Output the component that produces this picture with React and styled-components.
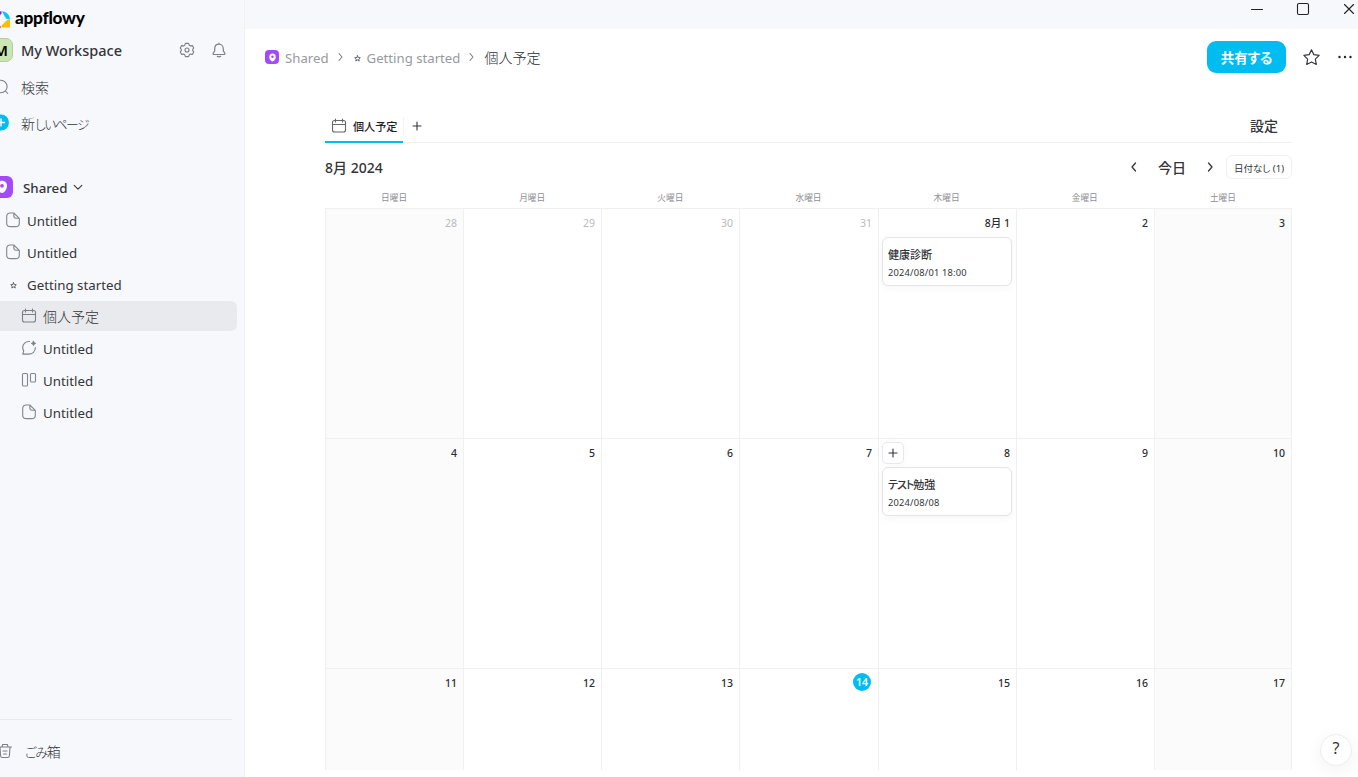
import React from "react"
import styled, { createGlobalStyle, css } from "styled-components"

const GlobalStyle = createGlobalStyle`
  * {
    box-sizing: border-box;
  }

  body {
    margin: 0;
    overflow: hidden;
    background: #ffffff;
    color: #333539;
    font-family: "Noto Sans", "Noto Sans CJK JP", sans-serif;
    font-size: 14px;
    font-feature-settings: "palt";
  }

  button {
    padding: 0;
    border: 0;
    background: none;
    color: inherit;
    font: inherit;
    font-feature-settings: inherit;
  }
`

const Icon = styled.svg`
  display: block;
  flex: none;
  width: ${(p) => p.$w || 16}px;
  height: ${(p) => p.$h || p.$w || 16}px;
  fill: none;
  stroke: ${(p) => p.$color || "#7d7f86"};
  stroke-width: ${(p) => p.$stroke || 1.1};
  stroke-linecap: round;
  stroke-linejoin: round;
  overflow: visible;
`

const Layout = styled.div`
  display: flex;
  width: 1358px;
  height: 777px;
  overflow: hidden;
`

/* Sidebar */

const Sidebar = styled.aside`
  display: flex;
  flex-direction: column;
  flex: none;
  width: 245px;
  background: #f7f8fc;
  border-right: 1px solid #f0f1f3;
  overflow: hidden;
`

const Brand = styled.div`
  display: flex;
  align-items: center;
  gap: 5px;
  height: 32px;
  margin-left: -8px;
  padding-top: 5px;
`

const BrandName = styled.span`
  margin-top: -1px;
  color: #000000;
  font-family: Lato, sans-serif;
  font-size: 17.2px;
  font-weight: 900;
  line-height: 20px;
  letter-spacing: -0.25px;
`

const WorkspaceRow = styled.div`
  display: flex;
  align-items: center;
  height: 36px;
  margin-left: -11px;
  padding-right: 17px;
`

const Avatar = styled.span`
  display: flex;
  align-items: center;
  justify-content: center;
  width: 24px;
  height: 24px;
  border: 1px solid #b5c9a4;
  border-radius: 7px;
  background: #cbe6b1;
  color: #000000;
  font-size: 15px;
  font-weight: 600;
`

const WorkspaceName = styled.span`
  flex: 1;
  margin-left: 8px;
  font-size: 14.5px;
  font-weight: 500;
`

const WorkspaceActions = styled.div`
  display: flex;
  gap: 16px;
`

const QuickLink = styled.div`
  display: flex;
  align-items: center;
  gap: 12px;
  height: 36px;
  margin-left: -7px;
  padding-top: 1px;
  font-weight: 300;

  svg {
    margin-top: 1px;
  }
`

const Kana = styled.span`
  font-size: ${(p) => p.$size || "inherit"};
  letter-spacing: ${(p) => p.$tight}px;
`

const SpaceHeader = styled.div`
  display: flex;
  align-items: center;
  height: 32px;
  margin: 31px 0 2px -9px;
  font-size: 13.3px;
  font-weight: 500;

  span {
    margin: 2px 4px 0 10px;
  }
`

const SpaceBadge = styled.div`
  display: flex;
  align-items: center;
  justify-content: center;
  flex: none;
  width: ${(p) => p.$size}px;
  height: ${(p) => p.$size}px;
  border-radius: ${(p) => p.$size / 4 + 0.5}px;
  background: #a34afd;
`

const PageRow = styled.div`
  display: flex;
  align-items: center;
  gap: 6px;
  height: 30px;
  margin: 0 7px 2px 0;
  padding-left: ${(p) => (p.$nested ? 21 : 5)}px;
  border-radius: 0 6px 6px 0;
  background: ${(p) => (p.$active ? "#e9eaee" : "transparent")};
  font-size: ${(p) => (p.$active ? 14 : 13.3)}px;
  font-weight: ${(p) => (p.$active ? 300 : 400)};

  span {
    padding-top: ${(p) => (p.$active ? 0 : 2)}px;
    margin-top: ${(p) => (p.$active ? -1 : 0)}px;
  }
`

const Emoji = styled.span`
  display: flex;
  justify-content: center;
  width: 16px;
`

const Trash = styled.div`
  display: flex;
  align-items: center;
  gap: 12px;
  height: 58px;
  margin: auto 12px 0 0;
  padding: 5px 0 0 0;
  border-top: 1px solid #e9eaee;
  font-weight: 300;

  svg {
    margin-left: -3px;
  }
`

/* Main area */

const Main = styled.main`
  position: relative;
  display: flex;
  flex-direction: column;
  flex: 1;
  min-width: 0;
`

const TitleBar = styled.div`
  display: flex;
  justify-content: flex-end;
  gap: 34px;
  height: 29px;
  padding: 3px 3px 0 0;
  background: #f7f8fc;
`

const Header = styled.header`
  display: flex;
  align-items: center;
  height: 56px;
  padding: 0 5px 0 20px;
`

const Crumbs = styled.nav`
  display: flex;
  align-items: center;
  flex: 1;
  color: #98999e;
  font-size: 13.2px;
  line-height: 20px;

  & > svg:nth-of-type(2) {
    margin-top: 2px;
  }
`

const Crumb = styled.span`
  margin-left: ${(p) => p.$gap || 0}px;
  padding-top: 2px;
  ${(p) =>
    p.$current &&
    css`
      padding-top: 1px;
      color: #2b2d31;
      font-size: 14px;
      font-weight: 300;
    `}
`

const CrumbArrow = styled(Icon)`
  margin: 0 ${(p) => p.$after}px 0 8px;
`

const ShareButton = styled.button`
  width: 79px;
  height: 32px;
  margin-right: 17px;
  border-radius: 9px;
  background: #00bcf0;
  color: #ffffff;
  font-size: 13.5px;
  font-weight: 700;
`

const MoreIcon = styled(Icon)`
  margin-left: 17px;
`

const Content = styled.div`
  width: 967px;
  margin: 24px 0 0 80px;
`

const TabBar = styled.div`
  display: flex;
  height: 34px;
  border-bottom: 1px solid #f0f0f1;
`

const Tab = styled.div`
  display: flex;
  align-items: center;
  gap: 6px;
  width: 78px;
  height: 34px;
  padding: 1px 0 0 6px;
  border-bottom: 2px solid #00bcf0;
  color: #1f2125;
  font-size: 11.1px;
  font-weight: 500;
  white-space: nowrap;
`

const AddTab = styled.button`
  display: flex;
  align-items: center;
  justify-content: center;
  width: 27px;
  height: 18px;
  margin-top: 8px;
  border-left: 1px solid #f2f2f3;
`

const Settings = styled.button`
  height: 32px;
  margin: 0 14px 0 auto;
  font-weight: 500;
`

const Toolbar = styled.div`
  display: flex;
  align-items: center;
  height: 48px;
`

const MonthTitle = styled.span`
  flex: 1;
  font-weight: 500;
  font-size: 14px;
`

const Today = styled.span`
  margin: 0 17px;
  font-weight: 500;
`

const NoDate = styled.button`
  width: 66px;
  height: 24px;
  margin-left: 9px;
  padding-top: 1px;
  border: 1px solid #f0f0f1;
  border-radius: 6px;
  font-size: 9.5px;
`

const Weekdays = styled.div`
  display: grid;
  grid-template-columns: repeat(7, 1fr);
  height: 15px;
  margin-top: 3px;
  color: #8f9095;
  font-size: 8.7px;
  line-height: 8px;
  text-align: center;
`

const Grid = styled.div`
  display: grid;
  grid-template-columns: 138px 138px 138px 139px 138px 138px 137px;
  grid-template-rows: 230px 230px 102px;
  width: 967px;
  height: 562px;
  margin-top: -1px;
  border-top: 1px solid #f0f0f1;
  border-left: 1px solid #f0f0f1;
  overflow: hidden;
`

const Day = styled.div`
  padding: 5px 3px 0;
  border-right: 1px solid #f0f0f1;
  border-bottom: 1px solid #f0f0f1;
  background: ${(p) => (p.$weekend ? "#fbfbfb" : "#ffffff")};
`

const DayHead = styled.div`
  display: flex;
  align-items: center;
  justify-content: flex-end;
  height: 18px;
  padding-right: 3px;
`

const DayNumber = styled.span`
  color: ${(p) => (p.$muted ? "#b9babd" : "#2b2d31")};
  font-size: 10.5px;
  font-weight: ${(p) => (p.$muted ? 400 : 500)};
  ${(p) =>
    p.$wide &&
    css`
      margin-top: -1px;
    `}
  ${(p) =>
    p.$today &&
    css`
      width: 18px;
      height: 18px;
      margin: -2px 1px 0 0;
      border-radius: 50%;
      background: #00bcf0;
      color: #ffffff;
      font-weight: 600;
      line-height: 19px;
      text-align: center;
    `}
`

const AddEvent = styled.button`
  display: flex;
  align-items: center;
  justify-content: center;
  width: 22px;
  height: 22px;
  margin: -2px auto -2px 0;
  border: 1px solid #e8e8ea;
  border-radius: 5px;
  background: #ffffff;
  box-shadow: 0 0 8px rgba(0, 0, 0, 0.03);
`

const EventCard = styled.div`
  width: 130px;
  height: 49px;
  margin-top: 5px;
  padding: 8px 5px;
  border: 1px solid #e3e4e6;
  border-radius: 6px;
  background: #ffffff;
  box-shadow: 0 2px 8px rgba(0, 0, 0, 0.04);
`

const EventTitle = styled.div`
  font-size: 11px;
  font-weight: 500;
  line-height: 17px;
`

const EventDate = styled.div`
  margin-top: 2px;
  font-size: 9.3px;
  letter-spacing: 0.2px;
  line-height: 15px;
`

const HelpButton = styled.button`
  position: absolute;
  right: 6px;
  bottom: 11px;
  width: 32px;
  height: 32px;
  padding-bottom: 4px;
  border: 1px solid #eeeeef;
  border-radius: 50%;
  background: #ffffff;
  box-shadow: 0 4px 18px rgba(0, 0, 0, 0.06);
  font-size: 16px;
`

function LogoMark() {
  return (
    <Icon viewBox="0 0 18 18" $w={18}>
      <g stroke="none">
        <path d="M10 1.300c4.300.3 7.700 3.300 8 8.200-2.500.2-3.700-.5-4.800-2.200L10 1.300Z" fill="#00c8ff" />
        <path d="M18 9.800v7.700h-7.300c-1.500 0-1.600-1.500-.6-2.600l4-3.800c1.100-1.100 2.400-1.600 3.900-1.300Z" fill="#ffbd00" />
        <path d="M0 9.500c.3-4.900 4.500-8.300 9.500-8.200L9.500 3.500 6 7.500C4.200 9.200 2.500 9.800 0 9.500Z" fill="#8427e0" />
        <path d="M0 10.500c3.500-.3 5 1 6.500 3.200l2.800 3.800C4.500 17.500.3 15 0 10.500Z" fill="#e3006d" />
      </g>
    </Icon>
  )
}

function GearIcon() {
  return (
    <Icon viewBox="0 0 16 16">
      <path d="M6.400 1.400h3.200l.7 1.900 1.100.6 2-.3 1.300 2.500-1 1.300v1.200l1 1.300-1.300 2.500-2-.3-1.100.6-.7 1.900H6.400l-.7-1.900-1.100-.6-2 .3-1.300-2.500 1-1.300V7.400l-1-1.300 1.300-2.500 2 .3 1.100-.6Z" />
      <circle cx="8" cy="8" r="2" />
    </Icon>
  )
}

function BellIcon() {
  return (
    <Icon viewBox="0 0 16 16" $stroke={1.2}>
      <path d="M8 1.200v1M3.700 7c0-2.800 1.700-4.800 4.300-4.800s4.300 2 4.300 4.800v2l1.500 2.200c.4.700 0 1.300-.8 1.300H3c-.8 0-1.200-.6-.8-1.300L3.700 9ZM6.300 14.300c1 .7 2.400.7 3.400 0" />
    </Icon>
  )
}

function SearchIcon() {
  return (
    <Icon viewBox="0 0 16 16">
      <circle cx="7.800" cy="7.500" r="6.300" />
      <path d="m12.500 12 2.200 2.500" />
    </Icon>
  )
}

function NewPageIcon() {
  return (
    <Icon viewBox="0 0 16 16" $color="#ffffff" $stroke={1.4}>
      <circle cx="8" cy="7.500" r="8" fill="#00bcf0" stroke="none" />
      <path d="M8 4v7M4.500 7.500h7" />
    </Icon>
  )
}

function PinIcon({ size }) {
  return (
    <Icon viewBox="0 0 14 14" $w={size}>
      <path
        d="M7 2.700c2.200 0 3.500 1.600 3.500 3.500 0 2.300-1.700 5-3.500 5s-3.500-2.700-3.500-5C3.500 4.300 4.800 2.700 7 2.700Z"
        fill="#ffffff"
        stroke="none"
      />
      <circle cx="7" cy="6.200" r="1.300" fill="#a34afd" stroke="none" />
    </Icon>
  )
}

function StarGlyph() {
  return (
    <Icon viewBox="0 0 8 8" $w={7} $color="#55575c" $stroke={1}>
      <path d="m4 .8.9 2.100 2.300.2-1.800 1.500.6 2.300-2-1.200-2 1.200.6-2.300L.8 3.100l2.300-.2Z" />
    </Icon>
  )
}

function PageIcon() {
  return (
    <Icon viewBox="0 0 16 16" $color="#85878c">
      <path d="M8.800 1H5.500C3 1 1.700 2.200 1.700 4.500v6.700c0 2.300 1.300 3.400 3.800 3.400h5c2.500 0 3.800-1.100 3.800-3.400V6.300L8.800 1v2.800c0 1.800.8 2.500 2.500 2.500h3" />
    </Icon>
  )
}

function CalendarIcon({ color }) {
  return (
    <Icon viewBox="0 0 16 16" $color={color}>
      <rect x="1.500" y="2.500" width="13" height="11.500" rx="2" />
      <path d="M1.500 6.500h13M4.500 1v3M11.500 1v3" />
    </Icon>
  )
}

function ChatIcon() {
  return (
    <Icon viewBox="0 0 16 16">
      <path d="M8.500 1.500C4.500 1.300 1.700 4 1.700 7.500c0 1.500.4 2.400 1 3.300l-.9 3.300h5.700c4 0 6.800-2.500 6.800-6.600" />
      <path
        d="m12.500 1.200.7 1.500 1.500.7-1.500.7-.7 1.500-.7-1.500-1.500-.7 1.500-.7Z"
        fill="#7d7f86"
        strokeWidth=".9"
      />
    </Icon>
  )
}

function BoardIcon() {
  return (
    <Icon viewBox="0 0 16 16" $color="#85878c">
      <rect x="1.500" y="1.500" width="5" height="12.500" rx="1" />
      <rect x="9.500" y="1.500" width="5" height="8.500" rx="1" />
    </Icon>
  )
}

function TrashIcon() {
  return (
    <Icon viewBox="0 0 16 16">
      <path d="M1.500 4h13M5 3.800l.6-2.300h4.800l.6 2.300M3 4.200l.6 8.600c.1 1.200.6 1.700 1.800 1.700h5.200c1.200 0 1.700-.5 1.800-1.700l.6-8.600M6 8h4M6.500 11h3" />
    </Icon>
  )
}

function Chevron({ dir, w = 14 }) {
  const paths = {
    left: "M8.500 3 5 7l3.500 4",
    right: "M5.500 3 9 7l-3.500 4",
    down: "m2.500 5 4.500 4.500L11.500 5",
  }
  return (
    <Icon viewBox="0 0 14 14" $w={w} $color="#34363b" $stroke={1.3}>
      <path d={paths[dir]} />
    </Icon>
  )
}

function PlusIcon() {
  return (
    <Icon viewBox="0 0 10 10" $w={10} $color="#34363b">
      <path d="M5 1v8M1 5h8" />
    </Icon>
  )
}

const pageIcons = {
  page: <PageIcon />,
  calendar: <CalendarIcon />,
  chat: <ChatIcon />,
  board: <BoardIcon />,
  star: (
    <Emoji>
      <StarGlyph />
    </Emoji>
  ),
}

const pages = [
  { icon: "page", title: "Untitled" },
  { icon: "page", title: "Untitled" },
  { icon: "star", title: "Getting started" },
  { icon: "calendar", title: "個人予定", nested: true, active: true },
  { icon: "chat", title: "Untitled", nested: true },
  { icon: "board", title: "Untitled", nested: true },
  { icon: "page", title: "Untitled", nested: true },
]

const weekdays = ["日曜日", "月曜日", "火曜日", "水曜日", "木曜日", "金曜日", "土曜日"]

const events = {
  4: { title: "健康診断", date: "2024/08/01 18:00" },
  11: { title: <><Kana $tight={-1}>テスト</Kana>勉強</>, date: "2024/08/08" },
}

// Three visible weeks, starting on July 28
const days = Array.from({ length: 21 }, (_, i) => ({
  label: i < 4 ? 28 + i : i === 4 ? "8月 1" : i - 3,
  wide: i === 4,
  muted: i < 4,
  today: i === 17,
  hovered: i === 11,
  weekend: i % 7 === 0 || i % 7 === 6,
  event: events[i],
}))

function SidebarPanel() {
  return (
    <Sidebar>
      <Brand>
        <LogoMark />
        <BrandName>appflowy</BrandName>
      </Brand>
      <WorkspaceRow>
        <Avatar>M</Avatar>
        <WorkspaceName>My Workspace</WorkspaceName>
        <WorkspaceActions>
          <GearIcon />
          <BellIcon />
        </WorkspaceActions>
      </WorkspaceRow>
      <QuickLink>
        <SearchIcon />
        検索
      </QuickLink>
      <QuickLink>
        <NewPageIcon />
        <span>
          新<Kana $size="12.8px" $tight={-1.6}>しいページ</Kana>
        </span>
      </QuickLink>
      <SpaceHeader>
        <SpaceBadge $size={22}>
          <PinIcon size={20} />
        </SpaceBadge>
        <span>Shared</span>
        <Chevron dir="down" w={12} />
      </SpaceHeader>
      {pages.map((page, i) => (
        <PageRow key={i} $nested={page.nested} $active={page.active}>
          {pageIcons[page.icon]}
          <span>{page.title}</span>
        </PageRow>
      ))}
      <Trash>
        <TrashIcon />
        <span>
          <Kana $size="13px" $tight={-1.2}>ごみ</Kana>箱
        </span>
      </Trash>
    </Sidebar>
  )
}

function WindowControls() {
  return (
    <TitleBar>
      <Icon viewBox="0 0 12 12" $w={12} $color="#222222">
        <path d="M.5 6.500h11" />
      </Icon>
      <Icon viewBox="0 0 12 12" $w={12} $color="#222222">
        <rect x=".5" y=".5" width="11" height="11" rx="1.500" />
      </Icon>
      <Icon viewBox="0 0 12 12" $w={12} $color="#222222">
        <path d="m1.500 1.500 9 9m0-9-9 9" />
      </Icon>
    </TitleBar>
  )
}

function PageHeader() {
  return (
    <Header>
      <Crumbs>
        <SpaceBadge $size={14}>
          <PinIcon size={13} />
        </SpaceBadge>
        <Crumb $gap={6}>Shared</Crumb>
        <CrumbArrow viewBox="0 0 7 10" $w={7} $h={10} $after={10}>
          <path d="m2 1.500 3 3.500-3 3.500" />
        </CrumbArrow>
        <StarGlyph />
        <Crumb $gap={6}>Getting started</Crumb>
        <CrumbArrow viewBox="0 0 7 10" $w={7} $h={10} $after={9}>
          <path d="m2 1.500 3 3.500-3 3.500" />
        </CrumbArrow>
        <Crumb $current>個人予定</Crumb>
      </Crumbs>
      <ShareButton>共有する</ShareButton>
      <Icon viewBox="0 0 16 16" $color="#34363b" $w={17}>
        <path d="m8 .8 2.200 4.500 5 .7-3.600 3.500.9 5L8 12.200l-4.500 2.300.9-5L.8 6l5-.7Z" />
      </Icon>
      <MoreIcon viewBox="0 0 16 16">
        <g fill="#222222" stroke="none">
          <circle cx="2.500" cy="8" r="1.200" />
          <circle cx="8" cy="8" r="1.200" />
          <circle cx="13.500" cy="8" r="1.200" />
        </g>
      </MoreIcon>
    </Header>
  )
}

function Calendar() {
  return (
    <Content>
      <TabBar>
        <Tab>
          <CalendarIcon color="#65676d" />
          個人予定
        </Tab>
        <AddTab>
          <PlusIcon />
        </AddTab>
        <Settings>設定</Settings>
      </TabBar>
      <Toolbar>
        <MonthTitle>8月 2024</MonthTitle>
        <Chevron dir="left" />
        <Today>今日</Today>
        <Chevron dir="right" />
        <NoDate>日付なし (1)</NoDate>
      </Toolbar>
      <Weekdays>
        {weekdays.map((name) => (
          <span key={name}>{name}</span>
        ))}
      </Weekdays>
      <Grid>
        {days.map((day, i) => (
          <Day key={i} $weekend={day.weekend}>
            <DayHead>
              {day.hovered && (
                <AddEvent>
                  <PlusIcon />
                </AddEvent>
              )}
              <DayNumber $muted={day.muted} $today={day.today} $wide={day.wide}>
                {day.label}
              </DayNumber>
            </DayHead>
            {day.event && (
              <EventCard>
                <EventTitle>{day.event.title}</EventTitle>
                <EventDate>{day.event.date}</EventDate>
              </EventCard>
            )}
          </Day>
        ))}
      </Grid>
    </Content>
  )
}

export default function App() {
  return (
    <Layout>
      <GlobalStyle />
      <SidebarPanel />
      <Main>
        <WindowControls />
        <PageHeader />
        <Calendar />
        <HelpButton>?</HelpButton>
      </Main>
    </Layout>
  )
}
